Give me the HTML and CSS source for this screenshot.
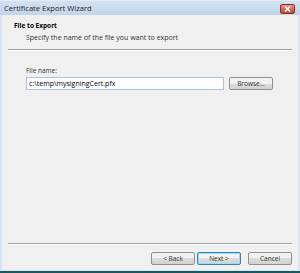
FILE: index.html
```html
<!DOCTYPE html>
<html lang="en">

<head>
    <meta charset="UTF-8">
    <meta name="viewport" content="width=device-width, initial-scale=1.0">
    <title>Certificate Export Wizard</title>
    <link rel="stylesheet" href="styles.css">
</head>

<body>
    <div class="window">
        <div class="titlebar">
            <span class="title">Certificate Export Wizard</span>
            <span class="close-btn">
                <svg width="7" height="6" viewBox="0 0 7 6">
                    <path d="M1 0.5 L6 5.5 M6 0.5 L1 5.5" stroke="#ffffff" stroke-width="1.6" />
                </svg>
            </span>
        </div>
        <div class="content">
            <div class="header">
                <div class="header-title">File to Export</div>
                <div class="header-text">Specify the name of the file you want to export</div>
            </div>
            <div class="separator"></div>
            <div class="form">
                <label for="fileName">File name:</label>
                <div class="file-row">
                    <input type="text" id="fileName" value="c:\temp\mysigningCert.pfx">
                    <button class="btn browse-btn">Browse...</button>
                </div>
            </div>
            <div class="separator"></div>
            <div class="footer">
                <button class="btn">&lt; Back</button>
                <button class="btn default-btn">Next &gt;</button>
                <button class="btn cancel-btn">Cancel</button>
            </div>
        </div>
    </div>
</body>

</html>
```

FILE: styles.css
```css
body {
    margin: 0;
    padding: 0;
    font-family: "Open Sans", "DejaVu Sans", sans-serif;
    font-size: 7px;
    color: #000000;
}

.window {
    width: 300px;
    height: 273px;
    box-sizing: border-box;
    display: flex;
    flex-direction: column;
    background-color: #d9e5f2;
    border-bottom: 2px solid #155a60;
}

.titlebar {
    height: 15px;
    flex-shrink: 0;
    display: flex;
    align-items: center;
    justify-content: space-between;
    padding: 0 5px 0 4px;
    background: linear-gradient(#d4e2f1, #c0d4ea);
    border-top: 1px solid #e3ecf6;
    box-sizing: border-box;
}

.title {
    font-size: 7.6px;
    color: #1e1e1e;
}

.close-btn {
    width: 15px;
    height: 10px;
    margin-top: 2px;
    display: flex;
    align-items: center;
    justify-content: center;
    background: linear-gradient(#e4928a, #c4463b);
    border: 1px solid #8a3029;
    border-radius: 2px;
    box-sizing: border-box;
}

.content {
    flex: 1;
    margin: 0 2px 1px 2px;
    background-color: #f0f0f0;
    display: flex;
    flex-direction: column;
    padding: 0 6px 5px 6px;
}

.header {
    height: 34px;
    padding: 6px 0 0 6px;
    box-sizing: border-box;
}

.header-title {
    font-weight: bold;
    font-size: 6.5px;
}

.header-text {
    margin-top: 3px;
    padding-left: 12px;
    color: #333333;
}

.separator {
    height: 0;
    border-top: 1px solid #a0a0a0;
    border-bottom: 1px solid #ffffff;
}

.form {
    flex: 1;
    padding: 15px 0 0 18px;
}

.form label {
    display: block;
    font-size: 6.5px;
    color: #333333;
}

.file-row {
    display: flex;
    align-items: center;
    margin-top: 2px;
}

input {
    width: 198px;
    height: 13px;
    box-sizing: border-box;
    margin: 0;
    padding: 0 2px;
    font-family: inherit;
    font-size: 7px;
    border: 1px solid #abc1de;
    background-color: #ffffff;
}

.btn {
    height: 13px;
    box-sizing: border-box;
    padding: 0;
    margin: 0;
    font-family: inherit;
    font-size: 6.5px;
    color: #333333;
    background: linear-gradient(#f2f2f2 50%, #dcdcdc 50%, #d2d2d2);
    border: 1px solid #8e8f8f;
    border-radius: 2px;
}

.browse-btn {
    width: 44px;
    margin-left: 5px;
    margin-top: -1px;
}

.footer {
    display: flex;
    justify-content: flex-end;
    padding-top: 7px;
}

.footer .btn {
    width: 44px;
    margin-left: 2px;
}

.default-btn {
    border-color: #3c7fb1;
    box-shadow: inset 0 0 0 1px #8ee1fb;
}

.footer .cancel-btn {
    margin-left: 7px;
}
```
